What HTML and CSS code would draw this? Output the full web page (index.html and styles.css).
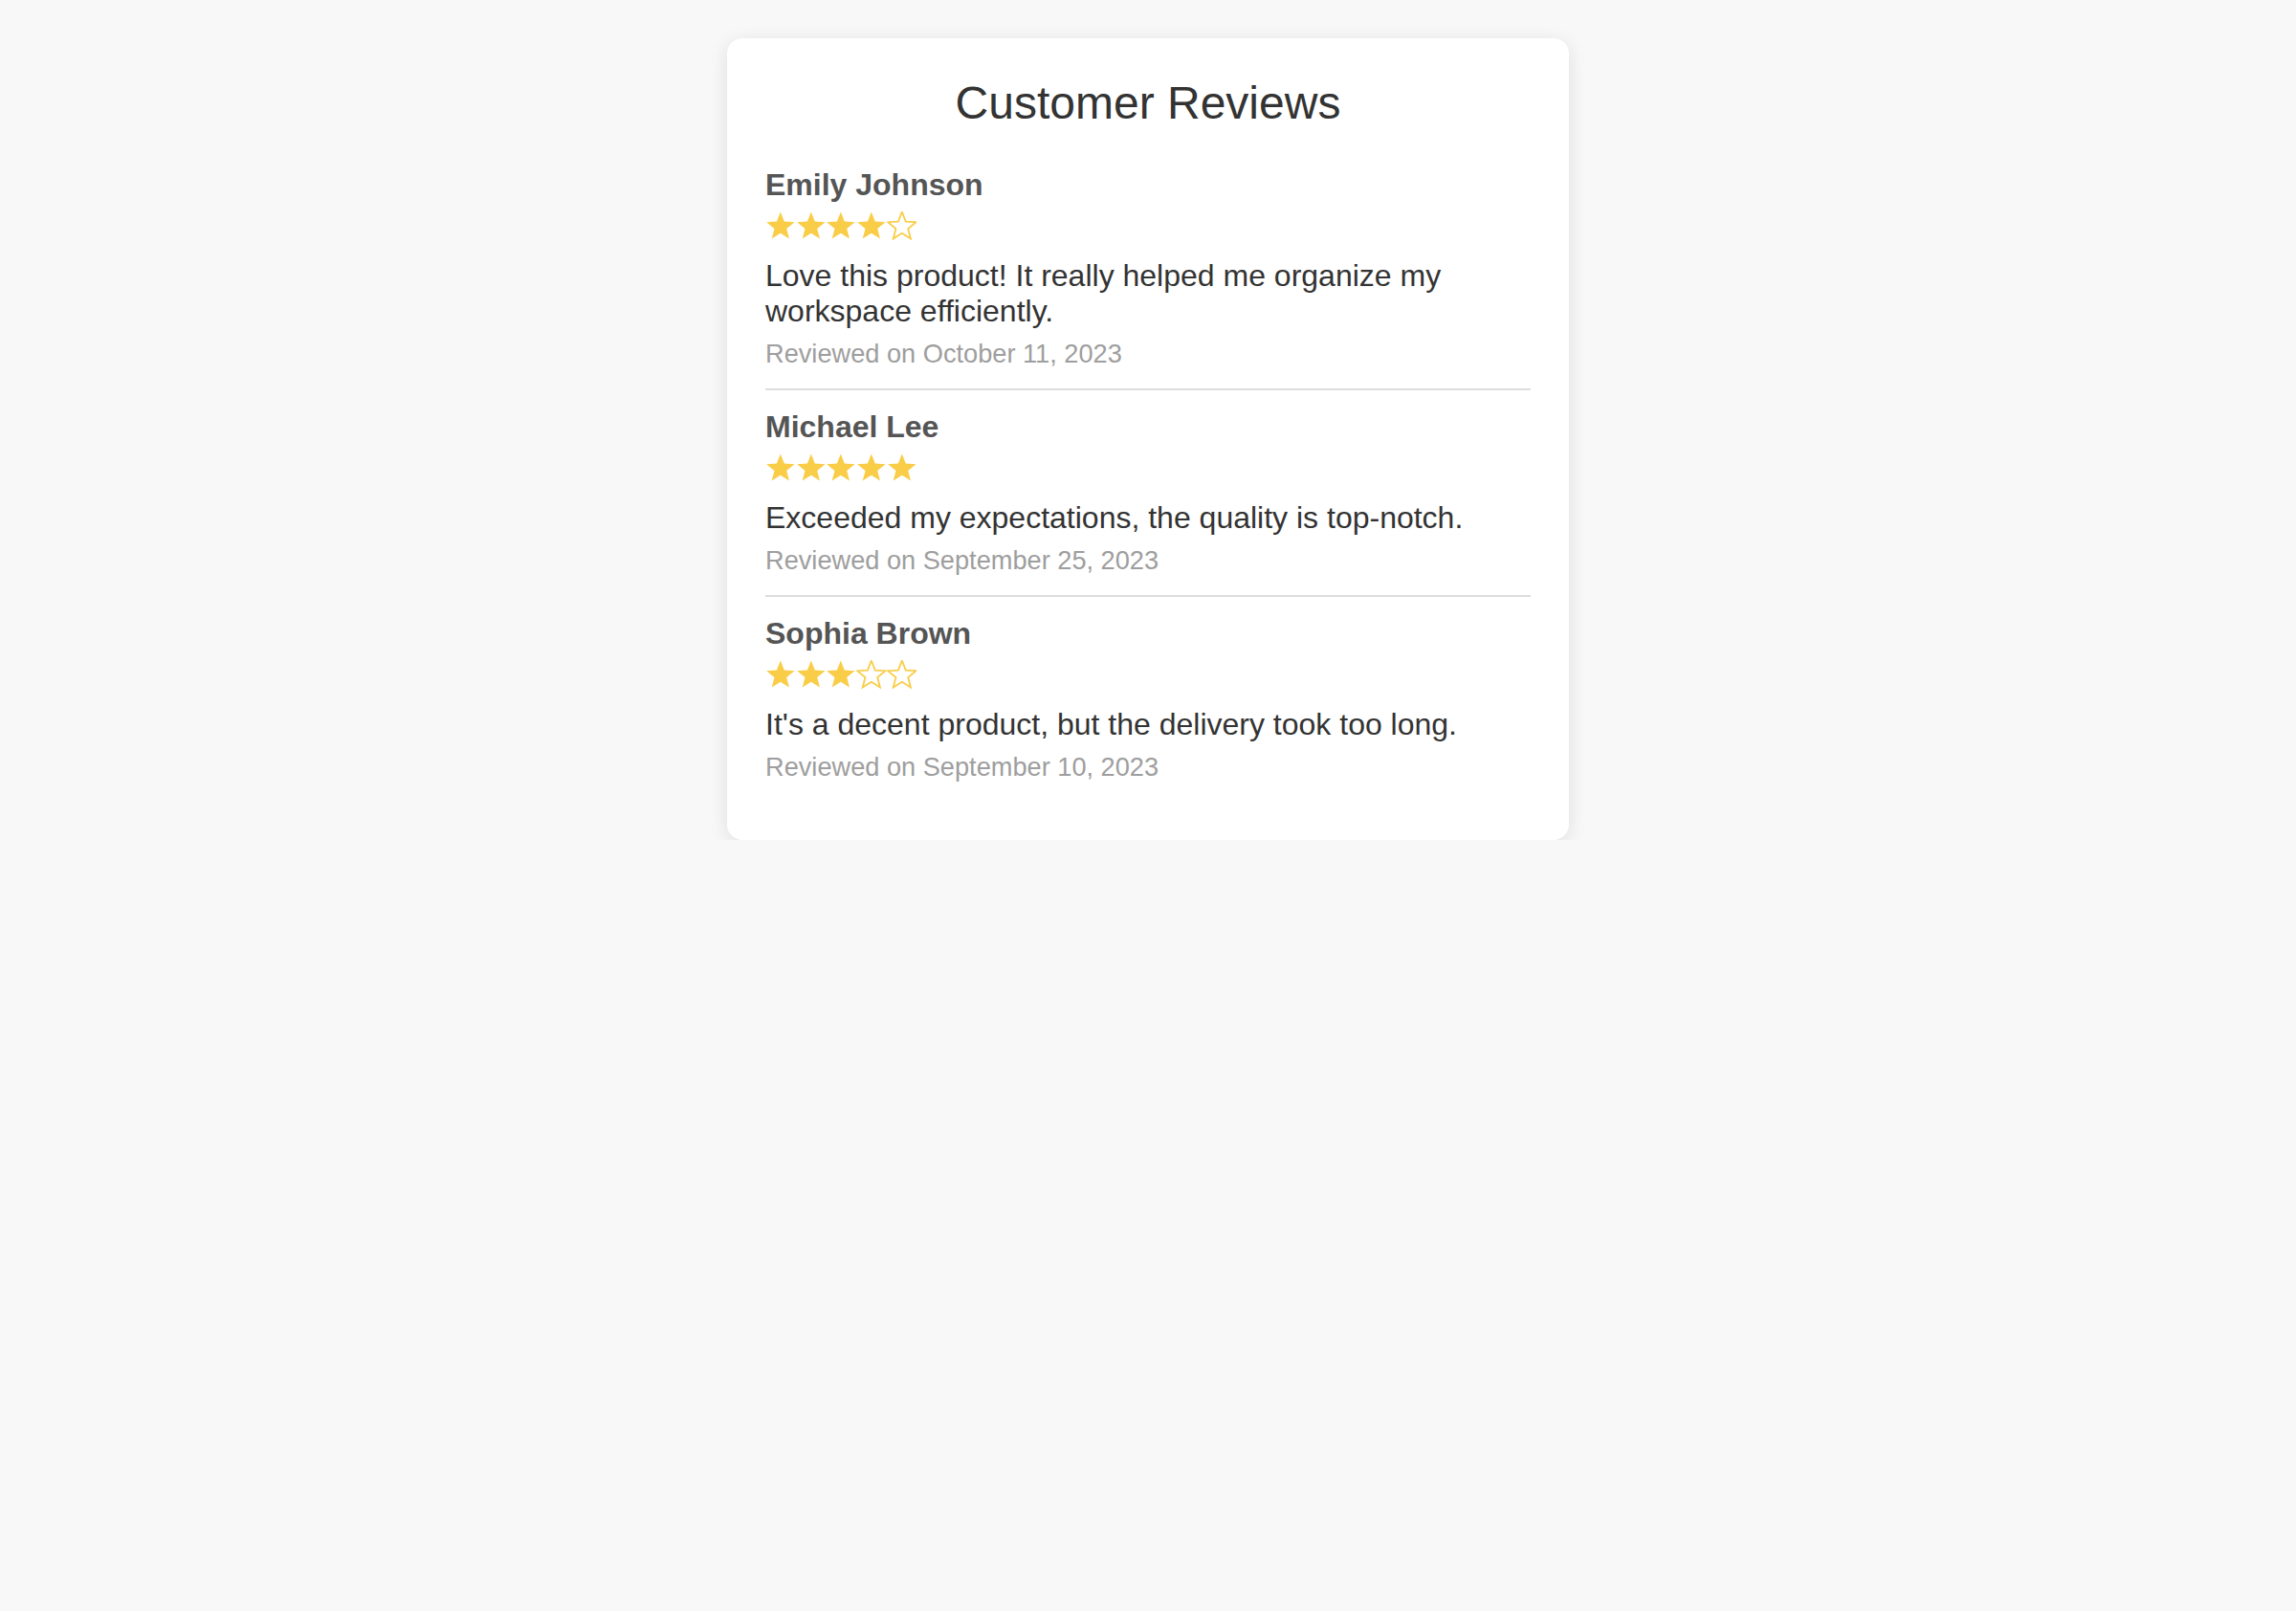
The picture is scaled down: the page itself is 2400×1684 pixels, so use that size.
FILE: index.html
```html
<!DOCTYPE html>
<html lang="en">
<head>
<meta charset="utf-8">
<title>Customer Reviews</title>
<link rel="stylesheet" href="styles.css">
</head>
<body>
<svg class="defs" width="0" height="0" aria-hidden="true">
  <defs>
    <polygon id="star" points="15.85,0.5 19.79,10.58 30.59,11.21 22.22,18.07 24.96,28.54 15.85,22.7 6.74,28.54 9.48,18.07 1.11,11.21 11.91,10.58"/>
  </defs>
</svg>
<main class="card">
  <h1 class="title">Customer Reviews</h1>

  <section class="review">
    <h2 class="name">Emily Johnson</h2>
    <div class="stars" aria-label="4 out of 5 stars">
      <svg class="star" viewBox="0 0 31.7 30"><use href="#star"/></svg>
      <svg class="star" viewBox="0 0 31.7 30"><use href="#star"/></svg>
      <svg class="star" viewBox="0 0 31.7 30"><use href="#star"/></svg>
      <svg class="star" viewBox="0 0 31.7 30"><use href="#star"/></svg>
      <svg class="star empty" viewBox="0 0 31.7 30"><use href="#star"/></svg>
    </div>
    <p class="text">Love this product! It really helped me organize my workspace efficiently.</p>
    <p class="date">Reviewed on October 11, 2023</p>
  </section>

  <section class="review">
    <h2 class="name">Michael Lee</h2>
    <div class="stars" aria-label="5 out of 5 stars">
      <svg class="star" viewBox="0 0 31.7 30"><use href="#star"/></svg>
      <svg class="star" viewBox="0 0 31.7 30"><use href="#star"/></svg>
      <svg class="star" viewBox="0 0 31.7 30"><use href="#star"/></svg>
      <svg class="star" viewBox="0 0 31.7 30"><use href="#star"/></svg>
      <svg class="star" viewBox="0 0 31.7 30"><use href="#star"/></svg>
    </div>
    <p class="text">Exceeded my expectations, the quality is top-notch.</p>
    <p class="date">Reviewed on September 25, 2023</p>
  </section>

  <section class="review">
    <h2 class="name">Sophia Brown</h2>
    <div class="stars" aria-label="3 out of 5 stars">
      <svg class="star" viewBox="0 0 31.7 30"><use href="#star"/></svg>
      <svg class="star" viewBox="0 0 31.7 30"><use href="#star"/></svg>
      <svg class="star" viewBox="0 0 31.7 30"><use href="#star"/></svg>
      <svg class="star empty" viewBox="0 0 31.7 30"><use href="#star"/></svg>
      <svg class="star empty" viewBox="0 0 31.7 30"><use href="#star"/></svg>
    </div>
    <p class="text">It's a decent product, but the delivery took too long.</p>
    <p class="date">Reviewed on September 10, 2023</p>
  </section>
</main>
</body>
</html>
```
FILE: styles.css
```css
* {
  box-sizing: border-box;
}

html, body {
  margin: 0;
  padding: 0;
}

body {
  background: #f8f8f8;
  font-family: "Liberation Sans", Arial, Helvetica, sans-serif;
  color: #333;
  padding-top: 40px;
}

.defs {
  position: absolute;
  width: 0;
  height: 0;
  overflow: hidden;
}

.card {
  display: block;
  width: 880px;
  margin: 0 auto;
  padding: 40px;
  background: #ffffff;
  border-radius: 16px;
  box-shadow: 0 4px 20px rgba(0, 0, 0, 0.1);
}

.title {
  margin: 0 0 20px;
  font-size: 48px;
  font-weight: normal;
  line-height: normal;
  text-align: center;
  color: #333;
}

.review {
  padding: 20px 0;
  border-bottom: 2px solid #dddddd;
}

.review:last-child {
  border-bottom: none;
}

.name {
  margin: 0 0 9px;
  font-size: 32px;
  font-weight: bold;
  line-height: normal;
  color: #555;
}

.stars {
  display: flex;
  height: 30px;
  margin-bottom: 19px;
}

.star {
  width: 31.7px;
  height: 30px;
  flex: none;
  fill: #f9cd47;
}

.star.empty {
  fill: none;
  stroke: #f9cd47;
  stroke-width: 1.8;
}

.text {
  margin: 0 0 10px;
  font-size: 32px;
  line-height: normal;
  color: #333;
}

.date {
  margin: 0;
  font-size: 27.2px;
  line-height: normal;
  color: #9e9e9e;
}
```
